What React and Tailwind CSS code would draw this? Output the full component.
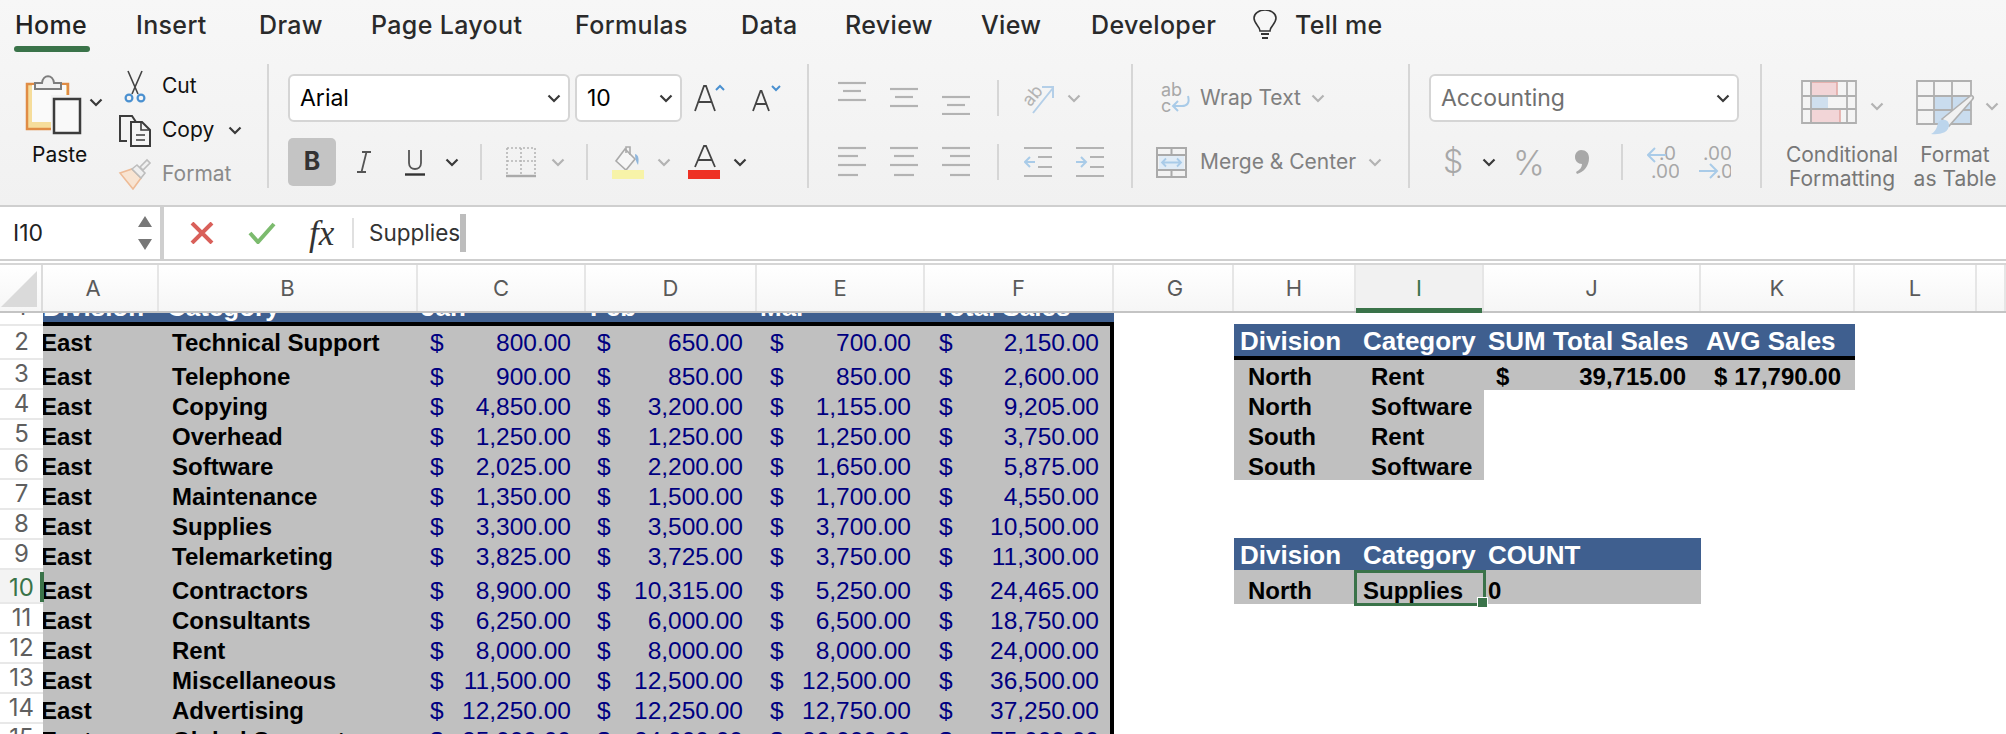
import React from 'react';

const ui = "font-['Inter',sans-serif]";
const cell = "font-['Liberation_Sans',Arial,sans-serif]";

const Chevron = ({ color = '#3a3a3a', className = '' }) => (
  <svg width="14" height="9" viewBox="0 0 14 9" className={`shrink-0 ${className}`}>
    <path d="M1.5 1.5L7 7l5.5-5.5" fill="none" stroke={color} strokeWidth="2.2" />
  </svg>
);

const Sep = ({ className = '' }) => <div className={`w-[2px] shrink-0 bg-[#d6d6d6] ${className}`} />;

// toolbar icons
const PasteIcon = () => (
  <svg width="60" height="64" viewBox="0 0 60 64">
    <rect x="3" y="12" width="41" height="45" fill="#f6dd9b" stroke="#e08c45" strokeWidth="2.5" />
    <rect x="8" y="13" width="34" height="37" fill="#fafafa" />
    <path d="M11 17v-6h7c1-9 11-9 12 0h7v6z" fill="#f1f1f1" stroke="#7d7d7d" strokeWidth="2" />
    <rect x="27" y="23" width="31" height="40" fill="#f3f3f3" />
    <rect x="30" y="27" width="26" height="34" fill="#f9f9f9" stroke="#3c3c3c" strokeWidth="2.5" />
  </svg>
);
const ScissorsIcon = () => (
  <svg width="24" height="33" viewBox="0 0 24 33">
    <path d="M5 1l10 23M19 1L9 24" fill="none" stroke="#444" strokeWidth="1.6" />
    <circle cx="6" cy="28" r="3.4" fill="none" stroke="#4a90d0" strokeWidth="2.2" />
    <circle cx="18" cy="28" r="3.4" fill="none" stroke="#4a90d0" strokeWidth="2.2" />
  </svg>
);
const CopyIcon = () => (
  <svg width="34" height="33" viewBox="0 0 34 33">
    <path d="M9 27H2V2h12l4 6" fill="none" stroke="#3c3c3c" strokeWidth="2" />
    <path d="M13 8h11l8 8v16H13z" fill="#f5f5f5" stroke="#3c3c3c" strokeWidth="2" />
    <path d="M23 8v8h9M18 21h9M18 26h9" fill="none" stroke="#3c3c3c" strokeWidth="1.6" />
  </svg>
);
const BrushIcon = () => (
  <svg width="34" height="32" viewBox="0 0 34 32">
    <path d="M2 15l12-4 9 9-8 11z" fill="#f8e4d2" stroke="#eebb96" strokeWidth="1.6" />
    <path d="M14 11l5-4 8 8-4 5z" fill="#efefef" stroke="#bdbdbd" strokeWidth="1.6" />
    <path d="M22 9l7-7 3 3-7 7z" fill="#efefef" stroke="#bdbdbd" strokeWidth="1.6" />
  </svg>
);
const ItalicIcon = () => (
  <svg width="16" height="24" viewBox="0 0 16 24">
    <path d="M6 2h9M1 22h9M10.5 2L5.5 22" fill="none" stroke="#555" strokeWidth="1.8" />
  </svg>
);
const UnderlineIcon = () => (
  <svg width="20" height="27" viewBox="0 0 20 27">
    <path d="M4 1v13c0 8 12 8 12 0V1" fill="none" stroke="#555" strokeWidth="1.8" />
    <path d="M0 25.5h20" stroke="#333" strokeWidth="2.4" />
  </svg>
);
const BordersIcon = () => (
  <svg width="32" height="32" viewBox="0 0 32 32">
    <path d="M2 2h28v26M2 2v26M16 2v26M2 15h28" fill="none" stroke="#b5b5b5" strokeWidth="1.6" strokeDasharray="2 2" />
    <path d="M1 30h30" stroke="#aaa" strokeWidth="2.4" />
  </svg>
);
const FillIcon = () => (
  <svg width="34" height="34" viewBox="0 0 34 34">
    <path d="M14 4l-9 12 10 9 9-11z" fill="#f6f6f6" stroke="#aaa" strokeWidth="1.6" />
    <path d="M15 8V2h4v8" fill="none" stroke="#aaa" strokeWidth="1.6" />
    <path d="M24 9c4 1 4 6 3 11-2-3-3-7-3-11z" fill="#8fb6dc" />
    <rect x="1" y="25" width="32" height="9" fill="#f7f3a8" />
  </svg>
);
const FontColorIcon = () => (
  <svg width="34" height="34" viewBox="0 0 34 34">
    <path d="M7 22L16 1h2l9 21M10.5 15h13" fill="none" stroke="#444" strokeWidth="1.8" />
    <rect x="0" y="25" width="32" height="9" fill="#ee3124" />
  </svg>
);
const GrowIcon = ({ down }) => (
  <svg width="32" height="30" viewBox="0 0 32 30">
    <path
      d={down ? 'M3 28L10.5 8h1L19 28M5.5 21h11' : 'M1 28L10 3h2l9 25M4.5 19h13'}
      fill="none"
      stroke="#444"
      strokeWidth="1.8"
    />
    <path d={down ? 'M22 3l4 4 4-4' : 'M22 7l4-4 4 4'} fill="none" stroke="#4a90d0" strokeWidth="2" />
  </svg>
);
const LinesIcon = ({ rows }) => (
  <svg width="28" height="34" viewBox="0 0 28 34" className="shrink-0">
    {rows.map(([y, x1, x2]) => (
      <path key={y} d={`M${x1} ${y}H${x2}`} stroke="#b3b3b3" strokeWidth="2.2" />
    ))}
  </svg>
);
const OrientIcon = () => (
  <svg width="33" height="33" viewBox="0 0 33 33" className="shrink-0">
    <text x="0" y="20" transform="rotate(-50 10 14)" fontSize="18" fill="#b3b3b3" fontFamily="Inter">ab</text>
    <path d="M11 31L31 6M20 5h11v11" fill="none" stroke="#b4cfe8" strokeWidth="2" />
  </svg>
);
const IndentIcon = ({ out }) => (
  <svg width="28" height="34" viewBox="0 0 28 34" className="shrink-0">
    <path d="M0 3h28M0 31h28M14 12h14M14 22h14" stroke="#b3b3b3" strokeWidth="2.2" />
    <path d={out ? 'M11 17H1M6 12l-5 5 5 5' : 'M0 17h10M5 12l5 5-5 5'} fill="none" stroke="#a9cbe8" strokeWidth="2" />
  </svg>
);
const WrapIcon = () => (
  <svg width="30" height="32" viewBox="0 0 30 32" className="shrink-0">
    <text x="0" y="14" fontSize="18" fill="#a8a8a8" fontFamily="Inter">ab</text>
    <text x="0" y="30" fontSize="18" fill="#a8a8a8" fontFamily="Inter">c</text>
    <path d="M27 14c2 7-1 10-6 10h-9M17 19l-5 5 5 5" fill="none" stroke="#a9cbe8" strokeWidth="2" />
  </svg>
);
const MergeIcon = () => (
  <svg width="31" height="31" viewBox="0 0 31 31" className="shrink-0">
    <rect x="3" y="8" width="25" height="15" fill="#e1ecf6" />
    <path d="M1 1h29v29H1zM15.5 1v7M15.5 23v7M1 8h29M1 23h29" fill="none" stroke="#aaa" strokeWidth="2" />
    <path d="M6 15.5h19M10 11.5l-4 4 4 4M21 11.5l4 4-4 4" fill="none" stroke="#a9cbe8" strokeWidth="1.8" />
  </svg>
);
const DecimalIcon = ({ inc }) => (
  <svg width="32" height="36" viewBox="0 0 32 36" className="shrink-0">
    {inc ? (
      <>
        <text x="12" y="16" fontSize="19" fill="#a8a8a8" fontFamily="Inter">.0</text>
        <text x="4" y="34" fontSize="19" fill="#a8a8a8" fontFamily="Inter">.00</text>
        <path d="M19 11H1M8 4l-7 7 7 7" fill="none" stroke="#a9cbe8" strokeWidth="2" />
      </>
    ) : (
      <>
        <text x="4" y="16" fontSize="19" fill="#a8a8a8" fontFamily="Inter">.00</text>
        <text x="17" y="34" fontSize="19" fill="#a8a8a8" fontFamily="Inter">.0</text>
        <path d="M0 27h18M11 20l7 7-7 7" fill="none" stroke="#a9cbe8" strokeWidth="2" />
      </>
    )}
  </svg>
);
const CondIcon = () => (
  <svg width="56" height="44" viewBox="0 0 56 44" className="shrink-0">
    <rect x="10" y="2" width="26" height="14" fill="#f2d5d7" stroke="#e3a9a5" strokeWidth="1.6" />
    <rect x="10" y="16" width="17" height="13" fill="#cfdfee" />
    <rect x="10" y="29" width="29" height="14" fill="#f2d5d7" stroke="#e3a9a5" strokeWidth="1.6" />
    <path d="M1 1h54v42H1zM10 1v42M46 1v42M1 16h54M1 29h54" fill="none" stroke="#b0b0b0" strokeWidth="1.8" />
  </svg>
);
const TableIcon = () => (
  <svg width="60" height="56" viewBox="0 0 60 56" className="shrink-0">
    <rect x="18" y="16" width="37" height="28" fill="#c9dcee" />
    <path d="M1 1h54v43H1zM18 1v43M36 1v43M1 16h54M1 30h54" fill="none" stroke="#b0b0b0" strokeWidth="1.8" />
    <path d="M26 39L53 17c3-3 6 0 3 3L33 46z" fill="#f1f1f1" stroke="#b0b0b0" strokeWidth="1.6" />
    <path d="M15 54c8 1 18-1 18-9 0-6-9-7-11-2-1 5-3 9-7 11z" fill="#bcd5ec" />
  </svg>
);

const Select = ({ text, className, textClass = 'text-black' }) => (
  <div className={`flex h-[48px] items-center justify-between rounded-[6px] border-2 border-[#d5d5d5] bg-white pl-[10px] pr-[7px] text-[23px] ${textClass} ${className}`}>
    <span>{text}</span>
    <Chevron />
  </div>
);

const tabs = [
  ['Home', 'w-[121px] font-bold text-[#222]'],
  ['Insert', 'w-[123px]'],
  ['Draw', 'w-[112px]'],
  ['Page Layout', 'w-[204px]'],
  ['Formulas', 'w-[166px]'],
  ['Data', 'w-[104px]'],
  ['Review', 'w-[136px]'],
  ['View', 'w-[110px]'],
  ['Developer', 'w-[162px]'],
];

const Ribbon = () => (
  <div className={`${ui} h-[205px] bg-linear-to-b from-[#f7f7f7] to-[#f1f1f1]`}>
    <div className="relative flex h-[64px] items-start pl-[15px] pt-[9px]">
      {tabs.map(([name, cls]) => (
        <div key={name} className={`whitespace-nowrap text-[25px] leading-[32px] tracking-[0.35px] text-[#2a2a2a] font-medium ${cls}`}>{name}</div>
      ))}
      <svg width="24" height="30" viewBox="0 0 24 30" className="mt-[1px] shrink-0">
        <path d="M7 21c0-5-6-7-6-13a11 8 0 0 1 22 0c0 6-6 8-6 13z" fill="none" stroke="#333" strokeWidth="1.6" />
        <path d="M8 24h8M9 28h6" stroke="#333" strokeWidth="1.8" />
      </svg>
      <div className="ml-[18px] whitespace-nowrap text-[25px] leading-[32px] tracking-[0.35px] font-medium text-[#2a2a2a]">Tell me</div>
      <div className="absolute left-[14px] top-[46px] h-[6px] w-[76px] rounded-full bg-[#3a7349]" />
    </div>

    <div className="flex h-[124px]">
      {/* clipboard */}
      <div className="flex w-[267px] shrink-0">
        <div className="relative w-[118px] shrink-0">
          <div className="ml-[24px] mt-[8px]"><PasteIcon /></div>
          <Chevron className="absolute left-[89px] top-[34px]" />
          <div className="absolute left-[32px] top-[77px] text-[21px] leading-[28px] text-[#111]">Paste</div>
        </div>
        <div className="flex flex-col text-[21px]">
          <div className="flex h-[44px] shrink-0 items-center text-[#111]">
            <div className="ml-[5px] w-[39px]"><ScissorsIcon /></div>Cut
          </div>
          <div className="flex h-[44px] shrink-0 items-center text-[#111]">
            <div className="w-[44px]"><CopyIcon /></div>Copy<Chevron className="ml-[14px]" />
          </div>
          <div className="flex h-[44px] shrink-0 items-center text-[#8a8a8a]">
            <div className="w-[44px]"><BrushIcon /></div>Format
          </div>
        </div>
      </div>
      <Sep className="h-[124px]" />

      {/* font */}
      <div className="flex w-[538px] shrink-0 flex-col pt-[10px]">
        <div className="flex h-[48px] items-center pl-[19px]">
          <Select text="Arial" className="w-[282px]" />
          <Select text="10" className="ml-[5px] w-[107px]" />
          <div className="ml-[12px]"><GrowIcon /></div>
          <div className="ml-[24px]"><GrowIcon down /></div>
        </div>
        <div className="mt-[16px] flex h-[48px] items-center pl-[19px]">
          <div className="flex h-[48px] w-[48px] items-center justify-center rounded-[5px] bg-[#c4c4c4] text-[25px] font-bold text-[#333]">B</div>
          <div className="ml-[20px]"><ItalicIcon /></div>
          <div className="ml-[33px]"><UnderlineIcon /></div>
          <Chevron className="ml-[20px]" />
          <Sep className="ml-[21px] h-[36px]" />
          <div className="ml-[23px]"><BordersIcon /></div>
          <Chevron color="#b3b3b3" className="ml-[14px]" />
          <Sep className="ml-[21px] h-[36px]" />
          <div className="ml-[23px]"><FillIcon /></div>
          <Chevron color="#b3b3b3" className="ml-[12px]" />
          <div className="ml-[17px]"><FontColorIcon /></div>
          <Chevron className="ml-[11px]" />
        </div>
      </div>
      <Sep className="h-[124px]" />

      {/* alignment */}
      <div className="flex w-[322px] shrink-0 flex-col pt-[10px]">
        <div className="flex h-[48px] items-center pl-[29px]">
          <LinesIcon rows={[[2, 0, 28], [10, 5, 23], [19, 0, 28]]} />
          <div className="ml-[24px]"><LinesIcon rows={[[8, 0, 28], [16, 5, 23], [25, 0, 28]]} /></div>
          <div className="ml-[24px]"><LinesIcon rows={[[16, 0, 28], [24, 5, 23], [33, 0, 28]]} /></div>
          <Sep className="ml-[27px] h-[36px]" />
          <div className="ml-[23px]"><OrientIcon /></div>
          <Chevron color="#b3b3b3" className="ml-[12px]" />
        </div>
        <div className="mt-[16px] flex h-[48px] items-center pl-[29px]">
          <LinesIcon rows={[[3, 0, 28], [11, 0, 20], [20, 0, 28], [30, 0, 20]]} />
          <div className="ml-[24px]"><LinesIcon rows={[[3, 0, 28], [11, 4, 24], [20, 0, 28], [30, 4, 24]]} /></div>
          <div className="ml-[24px]"><LinesIcon rows={[[3, 0, 28], [11, 8, 28], [20, 0, 28], [30, 8, 28]]} /></div>
          <Sep className="ml-[27px] h-[36px]" />
          <div className="ml-[25px]"><IndentIcon out /></div>
          <div className="ml-[24px]"><IndentIcon /></div>
        </div>
      </div>
      <Sep className="h-[124px]" />

      {/* wrap / merge */}
      <div className="flex w-[275px] shrink-0 flex-col pt-[10px] text-[21px] text-[#808080]">
        <div className="flex h-[48px] items-center pl-[28px]">
          <WrapIcon />
          <div className="ml-[9px] w-[111px]">Wrap Text</div>
          <Chevron color="#b3b3b3" />
        </div>
        <div className="mt-[16px] flex h-[48px] items-center pl-[23px]">
          <MergeIcon />
          <div className="ml-[13px] w-[168px] whitespace-nowrap">Merge &amp; Center</div>
          <Chevron color="#b3b3b3" />
        </div>
      </div>
      <Sep className="h-[124px]" />

      {/* number */}
      <div className="flex w-[350px] shrink-0 flex-col pt-[10px]">
        <div className="flex h-[48px] items-center pl-[19px]">
          <Select text="Accounting" className="w-[310px]" textClass="text-[#707070]" />
        </div>
        <div className="mt-[16px] flex h-[48px] items-center pl-[33px]">
          <div className="w-[18px] text-center text-[32px] font-light text-[#a8a8a8]">$</div>
          <Chevron className="ml-[21px]" />
          <div className="ml-[17px] w-[32px] text-center text-[34px] font-light text-[#a8a8a8]">%</div>
          <svg width="16" height="26" viewBox="0 0 16 26" className="ml-[29px] shrink-0">
            <path d="M7 1c5 0 8 3 8 8 0 8-5 14-12 16l-1-2c4-2 6-5 6-8-4 0-7-3-7-7s3-7 6-7z" fill="#a8a8a8" />
          </svg>
          <Sep className="ml-[31px] h-[36px]" />
          <div className="ml-[24px]"><DecimalIcon inc /></div>
          <div className="ml-[20px]"><DecimalIcon /></div>
        </div>
      </div>
      <Sep className="h-[124px]" />

      {/* styles */}
      <div className="flex flex-1 pl-[16px] text-center text-[21px] leading-[24px] text-[#777]">
        <div className="w-[128px] shrink-0">
          <div className="flex h-[60px] items-start pl-[23px] pt-[16px]">
            <CondIcon />
            <Chevron color="#b3b3b3" className="ml-[13px] mt-[22px]" />
          </div>
          <div className="mt-[19px]">Conditional</div>
          <div>Formatting</div>
        </div>
        <div className="w-[98px] shrink-0">
          <div className="flex h-[60px] items-start pl-[10px] pt-[16px]">
            <TableIcon />
            <Chevron color="#b3b3b3" className="ml-[9px] mt-[22px]" />
          </div>
          <div className="mt-[19px]">Format</div>
          <div>as Table</div>
        </div>
      </div>
    </div>
  </div>
);

const FormulaBar = () => (
  <div className={`${ui} flex h-[52px] items-center bg-white`}>
    <div className="flex h-full w-[160px] shrink-0 items-center justify-between pl-[13px] pr-[8px] text-[23px] text-[#222]">
      I10
      <svg width="14" height="34" viewBox="0 0 14 34">
        <path d="M7 0l7 11H0zM7 34L0 23h14z" fill="#777" />
      </svg>
    </div>
    <div className="h-full w-[4px] shrink-0 bg-[#cfcfcf]" />
    <svg width="24" height="22" viewBox="0 0 24 22" className="ml-[26px] shrink-0">
      <path d="M2 1l20 20M22 1L2 21" stroke="#d9605a" strokeWidth="4" />
    </svg>
    <svg width="28" height="22" viewBox="0 0 28 22" className="ml-[34px] shrink-0">
      <path d="M2 11l8 9L26 2" fill="none" stroke="#7cbb6e" strokeWidth="4" />
    </svg>
    <div className="ml-[33px] w-[28px] whitespace-nowrap font-['Liberation_Serif',serif] text-[35px] italic leading-none text-[#333]">fx</div>
    <div className="ml-[15px] h-[30px] w-[2px] shrink-0 bg-[#e0e0e0]" />
    <div className="ml-[15px] text-[22.5px] text-[#333]">Supplies</div>
    <div className="h-[38px] w-[6px] bg-[#bdbdbd]" />
  </div>
);

const cols = [
  ['A', 'w-[116px] pr-[14px]'], ['B', 'w-[259px]'], ['C', 'w-[168px]'], ['D', 'w-[171px]'], ['E', 'w-[168px]'], ['F', 'w-[189px]'],
  ['G', 'w-[120px] pl-[4px]'], ['H', 'w-[122px]'], ['I', 'w-[128px]'], ['J', 'w-[217px]'], ['K', 'w-[154px]'], ['L', 'w-[122px]'], ['', 'flex-1'],
];

const ColumnHeaders = () => (
  <div className={`${ui} flex h-[48px] border-b-2 border-[#c4c4c4] bg-linear-to-b from-white to-[#f6f6f6] text-[22px] text-[#5a5a5a]`}>
    <div className="flex h-full w-[43px] shrink-0 items-end justify-end border-r-2 border-[#dcdcdc] pb-[4px] pr-[4px]">
      <svg width="36" height="36" viewBox="0 0 36 36"><path d="M36 0v36H0z" fill="#dadada" /></svg>
    </div>
    {cols.map(([c, w]) => (
      <div
        key={c}
        className={`relative flex h-full items-center justify-center border-r-2 border-[#e6e6e6] ${w} ${c === 'I' ? 'bg-[#f1f1f1] text-[#3a7349]' : ''}`}
      >
        {c}
        {c === 'I' && <div className="absolute inset-x-0 -bottom-[2px] h-[5px] bg-[#3a7349]" />}
      </div>
    ))}
  </div>
);

const rows = [
  [2, 'Technical Support', '800.00', '650.00', '700.00', '2,150.00'],
  [3, 'Telephone', '900.00', '850.00', '850.00', '2,600.00'],
  [4, 'Copying', '4,850.00', '3,200.00', '1,155.00', '9,205.00'],
  [5, 'Overhead', '1,250.00', '1,250.00', '1,250.00', '3,750.00'],
  [6, 'Software', '2,025.00', '2,200.00', '1,650.00', '5,875.00'],
  [7, 'Maintenance', '1,350.00', '1,500.00', '1,700.00', '4,550.00'],
  [8, 'Supplies', '3,300.00', '3,500.00', '3,700.00', '10,500.00'],
  [9, 'Telemarketing', '3,825.00', '3,725.00', '3,750.00', '11,300.00'],
  [10, 'Contractors', '8,900.00', '10,315.00', '5,250.00', '24,465.00'],
  [11, 'Consultants', '6,250.00', '6,000.00', '6,500.00', '18,750.00'],
  [12, 'Rent', '8,000.00', '8,000.00', '8,000.00', '24,000.00'],
  [13, 'Miscellaneous', '11,500.00', '12,500.00', '12,500.00', '36,500.00'],
  [14, 'Advertising', '12,250.00', '12,250.00', '12,750.00', '37,250.00'],
  [15, 'Global Support', '25,000.00', '24,000.00', '26,000.00', '75,000.00'],
];

const rowHeight = { 2: 'h-[34px]', 10: 'h-[34px]', 15: 'h-[30px]' };

const RowNumber = ({ n }) => (
  <div
    className={`${ui} relative flex h-full w-[43px] shrink-0 items-end justify-center border-b-2 text-[24px] leading-[28px] ${
      n === 10 ? 'border-[#e8e8e8] bg-[#f3f3f3] text-[#3a7349]' : 'border-[#e8e8e8] bg-white text-[#5f5f5f]'
    } ${n === 2 ? 'pb-[2px]' : ''}`}
  >
    {n}
    {n === 10 && <div className="absolute -right-[1px] bottom-0 top-[2px] w-[4px] bg-[#3a7349]" />}
  </div>
);

const Money = ({ value, className }) => (
  <div className={`flex h-full items-end justify-between text-[24.5px] leading-[26px] text-[#000080] ${className}`}>
    <span>$</span>
    <span>{value}</span>
  </div>
);

const HeadCell = ({ children, className }) => (
  <div className={`-mt-[2px] flex h-[36px] items-center overflow-hidden whitespace-nowrap border-b-4 border-black bg-[#3f5f8f] pt-[2px] text-[26px] font-bold text-white ${className}`}>
    {children}
  </div>
);

const GrayCell = ({ children, className }) => (
  <div className={`flex h-full items-end whitespace-nowrap bg-[#c0c0c0] text-[24px] font-bold leading-[26px] text-black ${className}`}>
    {children}
  </div>
);

const rightSide = (n) => {
  const spacer = <div className="w-[120px] shrink-0" />;
  if (n === 2)
    return (
      <>
        {spacer}
        <HeadCell className="w-[122px] pl-[6px]">Division</HeadCell>
        <HeadCell className="w-[128px] pl-[7px]">Category</HeadCell>
        <HeadCell className="w-[217px] pl-[4px]">SUM Total Sales</HeadCell>
        <HeadCell className="w-[154px] pl-[5px]">AVG Sales</HeadCell>
      </>
    );
  if (n === 3)
    return (
      <>
        {spacer}
        <GrayCell className="w-[122px] pl-[14px]">North</GrayCell>
        <GrayCell className="w-[128px] pl-[15px]">Rent</GrayCell>
        <GrayCell className="w-[217px] justify-between pl-[12px] pr-[15px]"><span>$</span><span>39,715.00</span></GrayCell>
        <GrayCell className="w-[154px] justify-between pl-[13px] pr-[14px]"><span>$</span><span>17,790.00</span></GrayCell>
      </>
    );
  if (n >= 4 && n <= 6)
    return (
      <>
        {spacer}
        <GrayCell className="w-[122px] pl-[14px]">{n === 4 ? 'North' : 'South'}</GrayCell>
        <GrayCell className="w-[128px] pl-[15px]">{n === 5 ? 'Rent' : 'Software'}</GrayCell>
      </>
    );
  if (n === 9)
    return (
      <>
        {spacer}
        <HeadCell className="w-[122px] pl-[6px]">Division</HeadCell>
        <HeadCell className="w-[128px] pl-[7px]">Category</HeadCell>
        <HeadCell className="w-[217px] pl-[4px]">COUNT</HeadCell>
      </>
    );
  if (n === 10)
    return (
      <>
        {spacer}
        <GrayCell className="w-[122px] pl-[14px]">North</GrayCell>
        <GrayCell className="relative w-[128px] pl-[7px]">
          Supplies
          <div className="absolute -bottom-[2px] -left-[2px] -right-[2px] top-0 border-[3px] border-[#3a7349]" />
          <div className="absolute -bottom-[4px] -right-[4px] h-[11px] w-[11px] border border-white bg-[#3a7349]" />
        </GrayCell>
        <GrayCell className="w-[217px] pl-[4px]">0</GrayCell>
      </>
    );
  return null;
};

const Sheet = () => (
  <div className={`${cell} h-[421px] overflow-hidden bg-white`}>
    {/* row 1 only shows its last few pixels */}
    <div className="flex h-[13px]">
      <div className={`${ui} flex w-[43px] shrink-0 items-end justify-center overflow-hidden border-b-2 border-[#e8e8e8] bg-white text-[24px] leading-[30px] text-[#5f5f5f]`}>
        <span className="mb-[2px]">1</span>
      </div>
      <div className="flex w-[1071px] shrink-0 items-end overflow-hidden border-b-4 border-black bg-[#3f5f8f] text-[26px] font-bold leading-[30px] text-white">
        <div className="w-[124px] shrink-0">Division</div>
        <div className="w-[254px] shrink-0">Category</div>
        <div className="w-[169px] shrink-0">Jan</div>
        <div className="w-[170px] shrink-0">Feb</div>
        <div className="w-[175px] shrink-0">Mar</div>
        <div className="whitespace-nowrap">Total Sales</div>
      </div>
    </div>
    {rows.map(([n, category, c, d, e, f]) => (
      <div key={n} className={`flex ${rowHeight[n] || 'h-[30px]'}`}>
        <RowNumber n={n} />
        <div className={`flex h-full w-[1071px] shrink-0 border-r-4 border-black bg-[#c0c0c0] font-bold ${n === 2 ? 'pb-[4px]' : ''}`}>
          <div className="flex w-[116px] items-end overflow-hidden text-[24px] leading-[26px] text-black">
            <span className="-ml-[2px]">East</span>
          </div>
          <div className="flex w-[259px] items-end whitespace-nowrap pl-[13px] text-[24px] leading-[26px] text-black">{category}</div>
          <div className="flex font-normal">
            <Money value={c} className="w-[168px] pl-[12px] pr-[15px]" />
            <Money value={d} className="w-[171px] pl-[11px] pr-[14px]" />
            <Money value={e} className="w-[168px] pl-[13px] pr-[14px]" />
            <Money value={f} className="w-[185px] pl-[14px] pr-[11px]" />
          </div>
        </div>
        {rightSide(n)}
      </div>
    ))}
  </div>
);

export default function App() {
  return (
    <div className="h-[734px] w-[2006px] overflow-hidden bg-white">
      <Ribbon />
      <div className="h-[2px] bg-[#cfcfcf]" />
      <FormulaBar />
      <div className="h-[2px] bg-[#cfcfcf]" />
      <div className="h-[2px] bg-white" />
      <div className="h-[2px] bg-[#d6d6d6]" />
      <ColumnHeaders />
      <Sheet />
    </div>
  );
}
